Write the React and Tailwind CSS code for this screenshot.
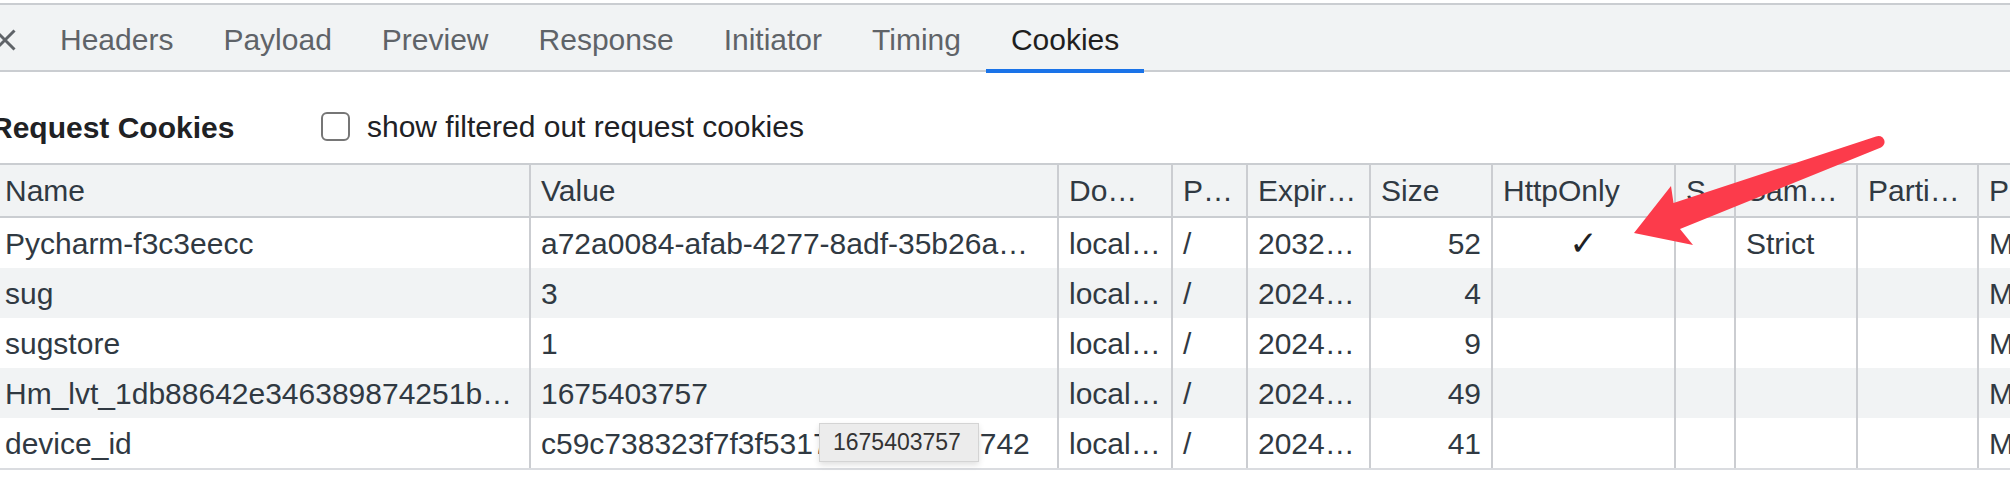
import React from 'react';

const tabs = ['Headers', 'Payload', 'Preview', 'Response', 'Initiator', 'Timing', 'Cookies'];

const cols = [
  { key: 'name', label: 'Name', w: 'w-[529px]', pad: 'pl-[5px] pr-[10px]' },
  { key: 'value', label: 'Value', w: 'w-[528px]' },
  { key: 'domain', label: 'Do…', w: 'w-[114px]' },
  { key: 'path', label: 'P…', w: 'w-[75px]' },
  { key: 'expires', label: 'Expir…', w: 'w-[123px]' },
  { key: 'size', label: 'Size', w: 'w-[122px]', align: 'justify-end' },
  { key: 'http', label: 'HttpOnly', w: 'w-[183px]', align: 'justify-center' },
  { key: 'secure', label: 'S', w: 'w-[60px]' },
  { key: 'same', label: 'Sam…', w: 'w-[122px]' },
  { key: 'part', label: 'Parti…', w: 'w-[121px]' },
  { key: 'prio', label: 'Priority', w: 'w-[160px]' },
];

const rows = [
  { name: 'Pycharm-f3c3eecc', value: 'a72a0084-afab-4277-8adf-35b26a…', expires: '2032…', size: '52', http: '✓', same: 'Strict' },
  { name: 'sug', value: '3', expires: '2024…', size: '4' },
  { name: 'sugstore', value: '1', expires: '2024…', size: '9' },
  { name: 'Hm_lvt_1db88642e346389874251b…', value: '1675403757', expires: '2024…', size: '49' },
  { name: 'device_id', value: 'c59c738323f7f3f5317e8d2b4a50742', expires: '2024…', size: '41' },
];

const Cell = ({ col, first, children }) => (
  <div
    className={`${col.w} shrink-0 h-full flex items-center overflow-hidden whitespace-nowrap ${
      first ? '' : 'border-l-2 border-[#cbcdd1]'
    } ${col.pad || 'pl-[10px] pr-[10px]'} ${col.align || ''}`}
  >
    {children}
  </div>
);

export default function App() {
  return (
    <div className="relative w-[2010px] h-[486px] overflow-hidden bg-white font-['Liberation_Sans',Arial,sans-serif] text-[30px] text-[#303942]">
      {/* tab strip */}
      <div className="mt-[3px] h-[69px] flex border-y-2 border-[#cacdd1] bg-[#f1f3f4]">
        <div className="w-[35px] shrink-0 flex items-center pt-[5px]">
          <svg width="22" height="22" viewBox="0 0 22 22" className="-ml-[6px]">
            <path d="M1.5 1.5 L20.5 20.5 M20.5 1.5 L1.5 20.5" stroke="#5f6368" strokeWidth="3" fill="none" />
          </svg>
        </div>
        {tabs.map((t) => (
          <div
            key={t}
            className={`-mb-[3px] px-[25px] pt-[5px] flex items-center whitespace-nowrap border-b-4 ${
              t === 'Cookies' ? 'border-[#1a73e8] text-[#1f1f1f]' : 'border-transparent text-[#5f6368]'
            }`}
          >
            {t}
          </div>
        ))}
      </div>

      {/* section title */}
      <div className="h-[91px] pt-[20px] flex items-center">
        <div className="w-[330px] shrink-0 -ml-[9px] font-bold text-[#202124] whitespace-nowrap">Request Cookies</div>
        <div className="w-[29px] h-[29px] shrink-0 -mt-[3px] rounded-[6px] border-[2.5px] border-[#767676] bg-white" />
        <div className="ml-[17px] -mt-[3px] whitespace-nowrap text-[#202124]">show filtered out request cookies</div>
      </div>

      {/* table */}
      <div className="border-t-2 border-b-2 border-t-[#cacdd1] border-b-[#dadce0]">
        <div className="h-[53px] flex bg-[#f1f3f4] border-b-2 border-[#cacdd1]">
          {cols.map((c, i) => (
            <Cell key={c.key} col={{ ...c, align: '' }} first={i === 0}>
              {c.label}
            </Cell>
          ))}
        </div>
        {rows.map((r, ri) => (
          <div key={r.name} className={`h-[50px] flex ${ri % 2 === 1 ? 'bg-[#f1f3f4]' : 'bg-white'}`}>
            {cols.map((c, i) => {
              let v = r[c.key] || '';
              if (c.key === 'domain') v = 'local…';
              if (c.key === 'path') v = '/';
              if (c.key === 'prio') v = 'Medium';
              return (
                <Cell key={c.key} col={c} first={i === 0}>
                  {c.key === 'http' && v ? (
                    <span className="font-['DejaVu_Sans',sans-serif] font-bold text-[34px] leading-none text-[#202124]">{v}</span>
                  ) : (
                    v
                  )}
                </Cell>
              );
            })}
          </div>
        ))}
      </div>

      {/* hover tooltip */}
      <div className="absolute left-[819px] top-[423px] w-[160px] h-[39px] pl-[13px] flex items-center bg-[#ececec] border border-[#d4d4d4] shadow-[0_3px_6px_rgba(0,0,0,0.12)] text-[23px] text-[#333333]">
        1675403757
      </div>

      {/* annotation arrow */}
      <svg className="absolute left-0 top-0 pointer-events-none" width="2010" height="486" viewBox="0 0 2010 486">
        <path
          d="M1634 233 L1671 186 L1673.5 203 L1876 136.5 A6 6 0 0 1 1881 147.5 L1680 229 L1693 245 Z"
          fill="#fc3b4b"
        />
      </svg>
    </div>
  );
}
